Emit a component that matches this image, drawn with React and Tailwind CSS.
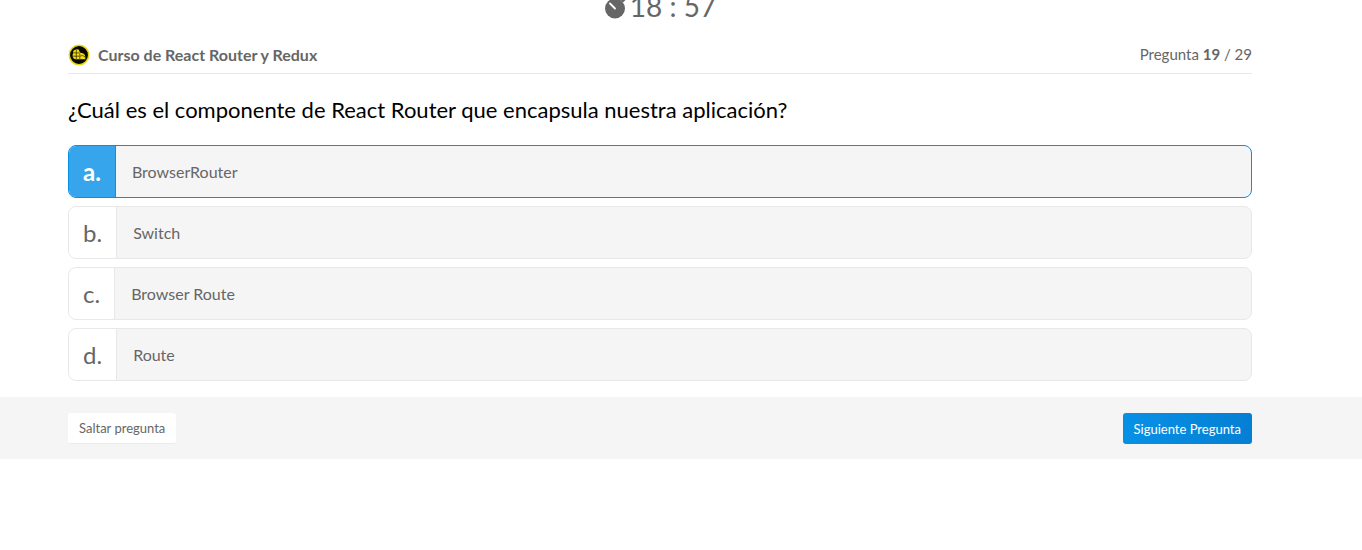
import { useState } from "react";

const options = [
  { key: "a", text: "BrowserRouter" },
  { key: "b", text: "Switch" },
  { key: "c", text: "Browser Route" },
  { key: "d", text: "Route" },
];

function StopwatchIcon() {
  return (
    <svg className="h-[26px] w-[22px]" viewBox="0 0 22 26" aria-hidden="true">
      <circle cx="11" cy="15.5" r="10" fill="#666" />
      <path d="M8 1h6v3h-2v3h-2V4H8z" fill="#666" />
      <path d="M16.5 7l2.5-2.5L21.5 7l-2.5 2.5z" fill="#666" />
      <path d="M6 10.5l5 5" stroke="#fff" strokeWidth="1.8" strokeLinecap="round" />
    </svg>
  );
}

function CourseBadge() {
  return (
    <svg className="h-[22px] w-[22px]" viewBox="0 0 22 22" aria-hidden="true">
      <circle cx="11" cy="11" r="9.7" fill="#080800" stroke="#e6d911" strokeWidth="1.5" />
      <path
        d="M5.4 6.8Q7.6 4.6 10.6 5.6L12 8.6 15.4 9.4Q18 11.4 17.2 15.2H8Q4.6 14.8 4.6 11.4Z"
        fill="#f2dc0c"
      />
      <g fill="none" stroke="#080800" strokeWidth="0.6">
        <path d="M5 8.9h6.6M4.8 12.2h6.6M8.3 5.6v9.4M11.8 9.4v5.8" />
        <path d="M12.2 12.2l2.2-.8 2.8 1.6" />
      </g>
    </svg>
  );
}

function Option({ option, checked, onSelect }) {
  return (
    <label
      className={`flex h-[53px] cursor-pointer overflow-hidden rounded-lg border bg-[#f5f5f5] ${
        checked ? "border-[#0791e6]" : "border-[#e8e8e8]"
      }`}
    >
      <input
        type="radio"
        name="answer"
        value={option.key}
        checked={checked}
        onChange={() => onSelect(option.key)}
        className="sr-only"
      />
      <span
        className={`flex items-center border-r px-[14px] text-2xl ${
          checked
            ? "border-[#0791e6] bg-[#37a5eb] font-bold text-white"
            : "border-[#e8e8e8] bg-white"
        }`}
      >
        {option.key}.
      </span>
      <span className="flex items-center px-4 text-base">{option.text}</span>
    </label>
  );
}

export default function App() {
  const [answer, setAnswer] = useState("a");

  return (
    <div className="overflow-hidden bg-white font-['Lato',sans-serif] text-[#666]">
      <main className="pr-[110px] pl-[68px]">
        <div className="-mt-3 flex h-9 items-center justify-center gap-1 text-[28px]">
          <StopwatchIcon />
          <time>18 : 57</time>
        </div>
        <header className="mt-3 flex h-[38px] items-center justify-between border-b border-[#e8e8e8]">
          <div className="flex items-center gap-2">
            <CourseBadge />
            <h2 className="text-base font-bold">Curso de React Router y Redux</h2>
          </div>
          <p className="text-[15px]">
            Pregunta <b>19</b> / 29
          </p>
        </header>
        <form>
          <fieldset>
            <legend className="pt-5 pb-[19px] text-[22px] leading-8 text-black">
              ¿Cuál es el componente de React Router que encapsula nuestra aplicación?
            </legend>
            <div className="flex flex-col gap-2">
              {options.map((option) => (
                <Option
                  key={option.key}
                  option={option}
                  checked={answer === option.key}
                  onSelect={setAnswer}
                />
              ))}
            </div>
          </fieldset>
        </form>
      </main>
      <footer className="mt-4 flex items-start justify-between bg-[#f5f5f5] pt-4 pr-[110px] pb-[15px] pl-[68px]">
        <button
          type="button"
          className="h-[31px] rounded-[3px] border-b border-[#ececec] bg-white px-[11px] pt-0.5 text-[13px]"
        >
          Saltar pregunta
        </button>
        <button
          type="button"
          className="h-[31px] rounded-[3px] bg-linear-to-r from-[#0791e6] to-[#057fd3] px-[11px] pt-0.5 text-[13px] text-white"
        >
          Siguiente Pregunta
        </button>
      </footer>
    </div>
  );
}
